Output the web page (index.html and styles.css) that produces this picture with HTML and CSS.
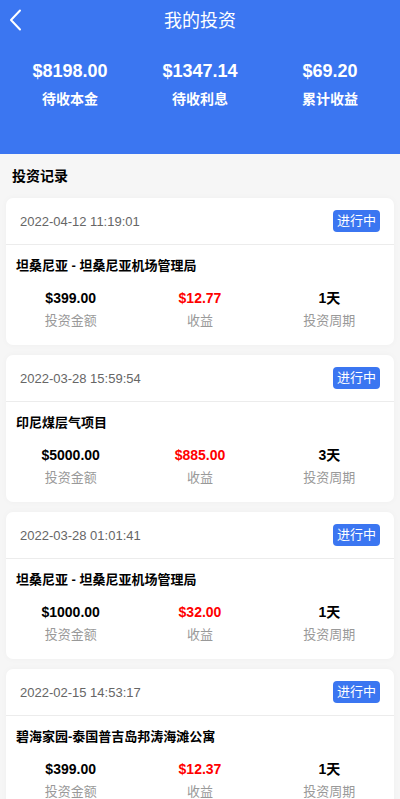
FILE: index.html
```
<!DOCTYPE html>
<html lang="zh">
<head>
<meta charset="utf-8">
<title>我的投资</title>
<link rel="stylesheet" href="styles.css">
</head>
<body>
<div class="page">
  <header class="hero">
    <div class="nav">
      <svg class="back" width="14" height="22" viewBox="0 0 14 22"><path d="M11 1.5 L2 11 L11 20.5" fill="none" stroke="#fff" stroke-width="2" stroke-linecap="round" stroke-linejoin="round"/></svg>
      <div class="nav-title">我的投资</div>
    </div>
    <div class="stats">
      <div class="stat"><div class="stat-num">$8198.00</div><div class="stat-label">待收本金</div></div>
      <div class="stat"><div class="stat-num">$1347.14</div><div class="stat-label">待收利息</div></div>
      <div class="stat"><div class="stat-num">$69.20</div><div class="stat-label">累计收益</div></div>
    </div>
  </header>
  <main class="content">
    <div class="section-title">投资记录</div>
    <div class="card">
      <div class="card-head"><span class="date">2022-04-12 11:19:01</span><span class="badge">进行中</span></div>
      <div class="card-body">
        <div class="proj">坦桑尼亚 - 坦桑尼亚机场管理局</div>
        <div class="cols">
          <div class="col"><div class="val">$399.00</div><div class="lbl">投资金额</div></div>
          <div class="col"><div class="val red">$12.77</div><div class="lbl">收益</div></div>
          <div class="col"><div class="val">1天</div><div class="lbl">投资周期</div></div>
        </div>
      </div>
    </div>
    <div class="card">
      <div class="card-head"><span class="date">2022-03-28 15:59:54</span><span class="badge">进行中</span></div>
      <div class="card-body">
        <div class="proj">印尼煤层气项目</div>
        <div class="cols">
          <div class="col"><div class="val">$5000.00</div><div class="lbl">投资金额</div></div>
          <div class="col"><div class="val red">$885.00</div><div class="lbl">收益</div></div>
          <div class="col"><div class="val">3天</div><div class="lbl">投资周期</div></div>
        </div>
      </div>
    </div>
    <div class="card">
      <div class="card-head"><span class="date">2022-03-28 01:01:41</span><span class="badge">进行中</span></div>
      <div class="card-body">
        <div class="proj">坦桑尼亚 - 坦桑尼亚机场管理局</div>
        <div class="cols">
          <div class="col"><div class="val">$1000.00</div><div class="lbl">投资金额</div></div>
          <div class="col"><div class="val red">$32.00</div><div class="lbl">收益</div></div>
          <div class="col"><div class="val">1天</div><div class="lbl">投资周期</div></div>
        </div>
      </div>
    </div>
    <div class="card">
      <div class="card-head"><span class="date">2022-02-15 14:53:17</span><span class="badge">进行中</span></div>
      <div class="card-body">
        <div class="proj">碧海家园-泰国普吉岛邦涛海滩公寓</div>
        <div class="cols">
          <div class="col"><div class="val">$399.00</div><div class="lbl">投资金额</div></div>
          <div class="col"><div class="val red">$12.37</div><div class="lbl">收益</div></div>
          <div class="col"><div class="val">1天</div><div class="lbl">投资周期</div></div>
        </div>
      </div>
    </div>
  </main>
</div>
</body>
</html>
```
FILE: styles.css
```
* { box-sizing: border-box; }
html, body { margin: 0; padding: 0; }
body {
  font-family: "Liberation Sans", Arial, "Noto Sans CJK SC", sans-serif;
  background: #f6f6f6;
  color: #000;
}
.page { width: 400px; overflow: hidden; }
.hero {
  background: #3b76f1;
  height: 154px;
  color: #fff;
}
.nav {
  height: 42px;
  display: flex;
  align-items: center;
  justify-content: center;
  position: relative;
}
.back { position: absolute; left: 9px; top: 9px; }
.nav-title { font-size: 18px; line-height: 44px; }
.stats {
  display: grid;
  grid-template-columns: repeat(3, 1fr);
  padding: 16px 5px 0;
}
.stat { text-align: center; }
.stat-num { font-size: 18px; font-weight: bold; line-height: 26px; }
.stat-label { font-size: 14px; font-weight: bold; line-height: 20px; margin-top: 5px; }
.content { padding: 0 6px; }
.section-title {
  font-size: 14px;
  font-weight: bold;
  line-height: 20px;
  padding: 12px 0 0 6px;
  height: 44px;
}
.card {
  background: #fff;
  border-radius: 7px;
  margin-bottom: 10px;
  box-shadow: 0 0 6px rgba(0,0,0,0.03);
}
.card-head {
  height: 47px;
  display: flex;
  align-items: center;
  justify-content: space-between;
  padding: 0 14px;
  border-bottom: 1px solid #ececec;
}
.date { font-size: 13px; color: #666; }
.badge {
  background: #3b76f1;
  color: #fff;
  font-size: 13px;
  line-height: 22px;
  height: 22px;
  padding: 0 4px;
  border-radius: 4px;
}
.card-body { padding: 11px 0 14px; }
.proj { font-size: 13px; font-weight: bold; line-height: 20px; padding-left: 10px; }
.cols {
  display: grid;
  grid-template-columns: repeat(3, 1fr);
  margin-top: 12px;
}
.col { text-align: center; }
.val { font-size: 14px; font-weight: bold; line-height: 20px; }
.val.red { color: #ff0000; }
.lbl { font-size: 13px; color: #999; line-height: 20px; margin-top: 3px; }
```
